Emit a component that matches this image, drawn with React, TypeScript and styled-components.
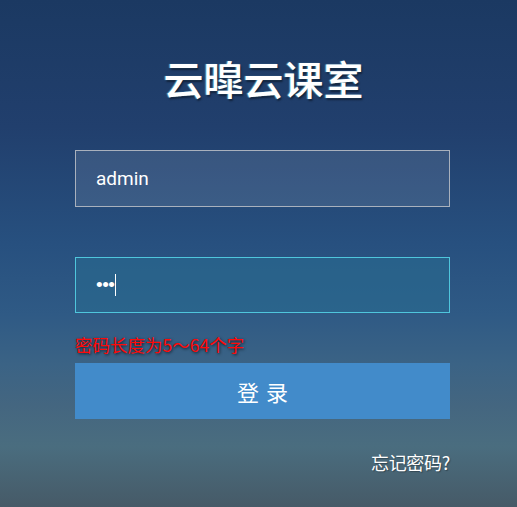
import React from "react";
import styled, { createGlobalStyle } from "styled-components";

const GlobalStyle = createGlobalStyle`
  html, body { margin: 0; padding: 0; height: 100%; }
  body {
    font-family: "Liberation Sans", Arial, "Noto Sans CJK SC", sans-serif;
  }
  #root { min-height: 100%; }
`;

const Page = styled.div`
  box-sizing: border-box;
  width: 100%;
  height: 100vh;
  padding-top: 56px;
  background: linear-gradient(
    180deg,
    #1b3962 0%,
    #213f6d 25%,
    #27507f 48%,
    #2f5a85 62%,
    #3b6385 72%,
    #446680 80%,
    #4a6d7f 88%,
    #465a67 100%
  );
`;

const Form = styled.div`
  width: 375px;
  margin-left: 75px;
  display: flex;
  flex-direction: column;
`;

const Title = styled.h1`
  margin: 0 0 50px;
  padding-left: 2px;
  text-align: center;
  font-family: "Noto Sans CJK SC", "Liberation Sans", sans-serif;
  font-weight: 500;
  font-size: 40px;
  line-height: 44px;
  color: #ffffff;
  text-shadow: -1px 0 1px rgba(120, 220, 255, 0.6), 1px 2px 2px rgba(0, 0, 0, 0.45);
`;

const Field = styled.div<{ $focused?: boolean }>`
  box-sizing: border-box;
  height: ${(p) => (p.$focused ? 56 : 57)}px;
  margin-top: ${(p) => (p.$focused ? 50 : 0)}px;
  padding: 0 20px;
  display: flex;
  align-items: center;
  border: 1px solid ${(p) => (p.$focused ? "#4fc6dc" : "#a9b1bd")};
  background: ${(p) => (p.$focused ? "rgba(40, 110, 145, 0.55)" : "rgba(255, 255, 255, 0.1)")};
  color: #ffffff;
  font-family: "Roboto", "Liberation Sans", sans-serif;
  font-size: 19px;
`;

const Dots = styled.span`
  font-family: "Liberation Sans", Arial, sans-serif;
  font-size: 19px;
  letter-spacing: -0.5px;
`;

const Caret = styled.span`
  display: inline-block;
  width: 1px;
  height: 22px;
  background: #ffffff;
  margin-left: 1px;
`;

const ErrorText = styled.div`
  margin-top: 21px;
  height: 22px;
  line-height: 22px;
  font-family: "Noto Sans CJK SC", sans-serif;
  font-size: 17.5px;
  letter-spacing: 0px;
  color: #ff0a0a;
  text-shadow: 1px 1px 3px rgba(0, 0, 0, 0.75);
`;

const LoginButton = styled.button`
  margin-top: 7px;
  height: 56px;
  border: none;
  background: #428bca;
  color: #ffffff;
  font-family: "Noto Sans CJK SC", sans-serif;
  font-size: 22px;
  letter-spacing: 7px;
  padding: 0 0 0 7px;
  cursor: pointer;
`;

const ForgotLink = styled.a`
  align-self: flex-end;
  margin-top: 33px;
  line-height: 20px;
  font-family: "Noto Sans CJK SC", sans-serif;
  font-size: 18px;
  letter-spacing: -0.3px;
  color: #ffffff;
  text-decoration: none;
  text-shadow: 1px 1px 1px rgba(0, 0, 0, 0.3);
`;

export default function App() {
  return (
    <>
      <GlobalStyle />
      <Page>
        <Form>
          <Title>云暭云课室</Title>
          <Field>admin</Field>
          <Field $focused>
            <Dots>•••</Dots>
            <Caret />
          </Field>
          <ErrorText>密码长度为5～64个字</ErrorText>
          <LoginButton>登录</LoginButton>
          <ForgotLink href="#">忘记密码?</ForgotLink>
        </Form>
      </Page>
    </>
  );
}
